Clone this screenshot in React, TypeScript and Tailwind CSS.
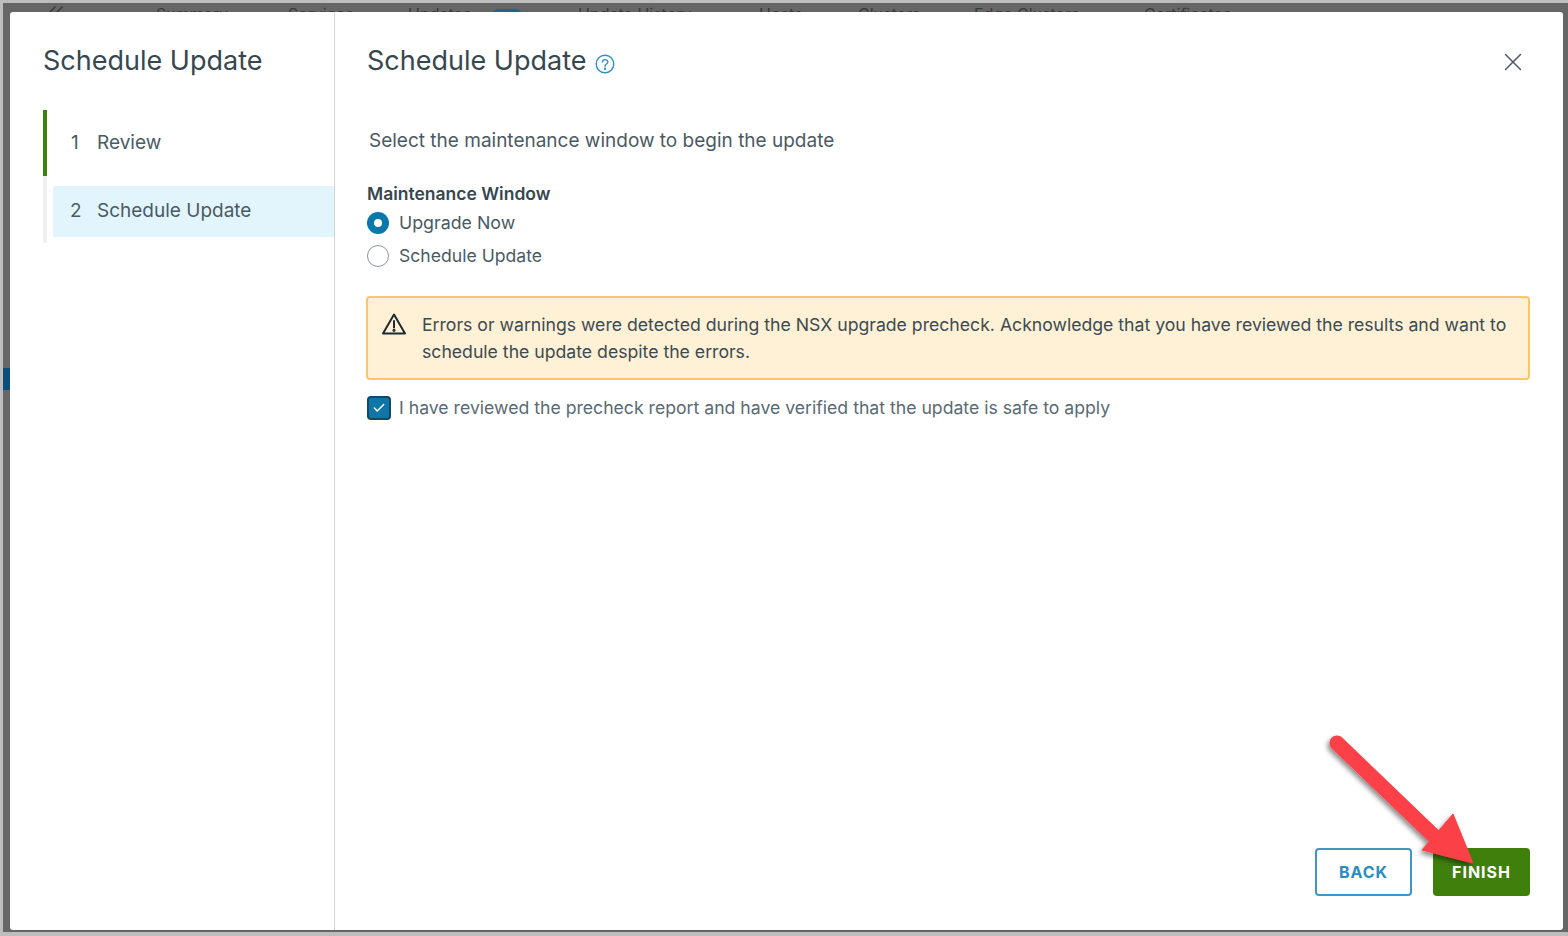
import { Check, ChevronsLeft, X } from "lucide-react";

const tabs = [
  { label: "Summary", width: "w-[132px]" },
  { label: "Services", width: "w-[120px]" },
  { label: "Updates", width: "w-[170px]" },
  { label: "Update History", width: "w-[181px]" },
  { label: "Hosts", width: "w-[99px]" },
  { label: "Clusters", width: "w-[116px]" },
  { label: "Edge Clusters", width: "w-[170px]" },
  { label: "Certificates", width: "w-[120px]" },
];

function WarningIcon() {
  return (
    <svg width="26" height="24" viewBox="0 0 26 24" fill="none" stroke="#1f2a30" strokeWidth="2" strokeLinejoin="round">
      <path d="M13 2.5 L24 21.5 H2 Z" />
      <path d="M13 9 V15.5" strokeLinecap="round" />
      <circle cx="13" cy="18.3" r="0.6" fill="#1f2a30" />
    </svg>
  );
}

function HelpIcon() {
  return (
    <svg width="20" height="20" viewBox="0 0 20 20" fill="none" stroke="#2f8fc4" strokeWidth="1.4">
      <circle cx="10" cy="10" r="8.8" />
      <path d="M7.4 8 C7.4 4.8 12.8 4.8 12.8 8 C12.8 10 10 10 10 12.2" strokeLinecap="round" />
      <circle cx="10" cy="14.8" r="0.5" fill="#2f8fc4" />
    </svg>
  );
}

export default function App() {
  return (
    <div className="relative h-[936px] w-[1568px] overflow-hidden bg-[#bdbdbd] pt-[3px] pb-[4px] pl-[3px] font-['Inter',sans-serif]">
      <div className="relative flex h-full flex-col bg-[#666666] pr-[5px] pb-[2px] pl-[7px]">
        {/* page behind the modal, only a sliver shows */}
        <ChevronsLeft className="absolute top-[-3px] left-[41px] text-[#3a3a3a]" size={24} strokeWidth={1.5} />
        <span className="absolute top-[365px] left-0 h-[22px] w-[7px] bg-[#0d4f78]" />
        <div className="flex h-[9px] shrink-0 overflow-hidden pl-[146px] text-[16px] leading-[22px] text-[#3a3a3a]">
          {tabs.map((tab) => (
            <span key={tab.label} className={`relative shrink-0 ${tab.width}`}>
              {tab.label}
              {tab.label === "Updates" && (
                <span className="absolute top-[6px] left-[83px] h-[16px] w-[32px] rounded-full bg-[#23638a]" />
              )}
            </span>
          ))}
        </div>

        <div className="relative flex min-h-0 flex-1 rounded-[3px] bg-white text-[#4a5a63]">
          {/* wizard steps */}
          <div className="w-[325px] shrink-0 border-r border-[#cfd6da] pt-[31px] pl-[33px]">
            <h2 className="text-[27px] leading-[36px] text-[#36474f]">Schedule Update</h2>
            <div className="mt-[31px] flex flex-col">
              <div className="flex h-[66px] items-center border-l-[4px] border-[#3f7f0c] text-[19px]">
                <span className="ml-[24px] w-[26px]">1</span>
                <span>Review</span>
              </div>
              <div className="flex h-[67px] border-l-[4px] border-[#f0f0f0] pt-[10px]">
                <div className="ml-[6px] flex h-[51px] flex-1 items-center bg-[#e3f5fc] text-[19px]">
                  <span className="ml-[17px] w-[27px]">2</span>
                  <span>Schedule Update</span>
                </div>
              </div>
            </div>
          </div>

          {/* step content */}
          <div className="flex min-w-0 flex-1 flex-col pt-[31px] pr-[33px] pb-[34px] pl-[32px]">
            <div className="flex h-[36px] items-center justify-between">
              <div className="flex items-center gap-[9px]">
                <h2 className="text-[27px] leading-[36px] text-[#36474f]">Schedule Update</h2>
                <div className="mt-[6px]">
                  <HelpIcon />
                </div>
              </div>
              <X className="mt-[2px] mr-[2px] text-[#4a5a63]" size={30} strokeWidth={1.2} />
            </div>

            <p className="mt-[48px] ml-[2px] text-[19px] leading-[28px]">Select the maintenance window to begin the update</p>

            <div className="mt-[26px] text-[17.5px] leading-[26px] font-semibold text-[#36474f]">Maintenance Window</div>
            <div className="mt-[3px] flex h-[26px] items-center gap-[10px] text-[17.8px]">
              <span className="flex h-[22px] w-[22px] items-center justify-center rounded-full bg-[#0a77ad]">
                <span className="h-[8px] w-[8px] rounded-full bg-white" />
              </span>
              <span>Upgrade Now</span>
            </div>
            <div className="mt-[7px] flex h-[26px] items-center gap-[10px] text-[17.6px]">
              <span className="h-[22px] w-[22px] rounded-full border border-[#8a9aa3]" />
              <span>Schedule Update</span>
            </div>

            <div className="mt-[27px] -ml-[1px] flex h-[84px] items-start rounded-[4px] border-2 border-[#fbc569] bg-[#fef1d6] pt-[13px] pl-[13px] text-[17.65px] leading-[27px] text-[#3d4a52]">
              <div className="mt-[1px] w-[41px] shrink-0">
                <WarningIcon />
              </div>
              <p>
                Errors or warnings were detected during the NSX upgrade precheck. Acknowledge that you have reviewed the results and want to
                schedule the update despite the errors.
              </p>
            </div>

            <div className="mt-[15px] flex items-center gap-[8px] text-[17.65px] text-[#5a6a73]">
              <span className="flex h-[24px] w-[24px] items-center justify-center rounded-[4px] border-2 border-[#134a63] bg-[#0f77a8]">
                <Check className="text-white" size={14} strokeWidth={2.5} />
              </span>
              <span>I have reviewed the precheck report and have verified that the update is safe to apply</span>
            </div>

            <div className="mt-auto flex justify-end gap-[21px]">
              <button className="h-[48px] w-[97px] rounded-[4px] border-2 border-[#3d98c6] text-[16px] font-bold tracking-[1px] text-[#2a8cbf]">
                BACK
              </button>
              <button className="h-[48px] w-[97px] rounded-[4px] bg-[#3f7f0c] text-[16px] font-bold tracking-[1px] text-white">
                FINISH
              </button>
            </div>
          </div>
        </div>
      </div>

      {/* callout arrow added on top of the screenshot */}
      <svg className="absolute top-0 left-0" width="1568" height="936" viewBox="0 0 1568 936" fill="none">
        <defs>
          <filter id="arrowShadow" x="-20%" y="-20%" width="140%" height="140%">
            <feDropShadow dx="-2" dy="3" stdDeviation="2.5" floodColor="#000000" floodOpacity="0.45" />
          </filter>
        </defs>
        <g filter="url(#arrowShadow)">
          <path d="M1337 743 L1438 840" stroke="#fb4146" strokeWidth="15" strokeLinecap="round" />
          <path d="M1453 814 L1473 863 L1422 850 Z" fill="#fb4146" stroke="#fb4146" strokeWidth="1" strokeLinejoin="round" />
        </g>
      </svg>
    </div>
  );
}
